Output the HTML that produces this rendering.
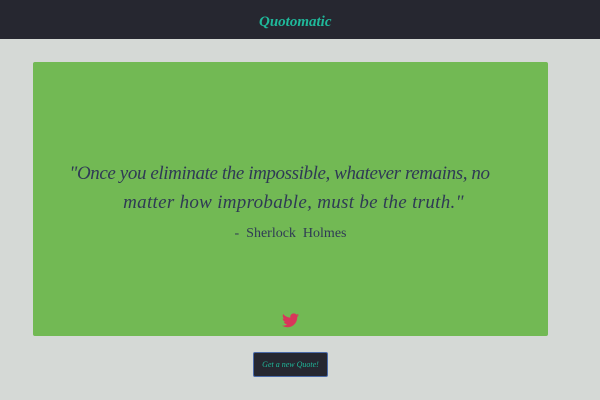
<!DOCTYPE html>
<html><head><style>
body{margin:0;width:600px;height:400px;background:#d5d9d6;overflow:hidden;font-family:"Liberation Serif",serif;}
.nav{position:absolute;left:0;top:0;width:600px;height:39px;background:#262730;}
.nav span{position:absolute;left:259px;top:14px;color:#1fb89a;font-style:italic;font-weight:bold;font-size:15px;}
.card{position:absolute;left:33px;top:62px;width:515px;height:274px;background:#72b954;border-radius:2px;}
.q{position:absolute;width:515px;text-align:center;color:#2f3a55;font-style:italic;font-size:19px;line-height:29px;letter-spacing:-0.4px;white-space:nowrap;}
.a{position:absolute;left:0;width:515px;top:164px;text-align:center;color:#2f3a55;font-size:14px;}
.tw{position:absolute;left:249px;top:251px;}
.btn{position:absolute;left:253px;top:352px;width:73px;height:23px;background:#262730;border:1.5px solid #4a6aa8;border-radius:2px;color:#1fb89a;font-style:italic;font-size:8px;text-align:center;line-height:23px;}
</style></head><body>
<div class="nav"><span>Quotomatic</span></div>
<div class="card">
<div class="q" style="left:-11px;top:97px">"Once you eliminate the impossible, whatever remains, no</div>
<div class="q" style="left:3px;top:126px;letter-spacing:0.3px">matter how improbable, must be the truth."</div>
<div class="a">-&nbsp; Sherlock&nbsp; Holmes</div>
<svg class="tw" width="17" height="15" viewBox="0 0 24 20"><path fill="#d9365a" d="M24 2.4c-.9.4-1.8.6-2.8.8 1-.6 1.8-1.6 2.2-2.7-1 .6-2 1-3.1 1.2C19.3.6 18 0 16.6 0c-2.7 0-4.9 2.2-4.9 4.9 0 .4 0 .8.1 1.1C7.7 5.8 4.1 3.9 1.7.9c-.4.7-.7 1.6-.7 2.5 0 1.7.9 3.2 2.2 4.1-.8 0-1.6-.2-2.2-.6v.1c0 2.4 1.7 4.4 3.9 4.8-.4.1-.8.2-1.3.2-.3 0-.6 0-.9-.1.6 2 2.4 3.4 4.6 3.4-1.7 1.3-3.8 2.1-6.1 2.1-.4 0-.8 0-1.2-.1 2.2 1.4 4.8 2.2 7.5 2.2 9.1 0 14-7.5 14-14v-.6c1-.7 1.8-1.6 2.5-2.5z"/></svg>
</div>
<div class="btn">Get a new Quote!</div>
</body></html>
